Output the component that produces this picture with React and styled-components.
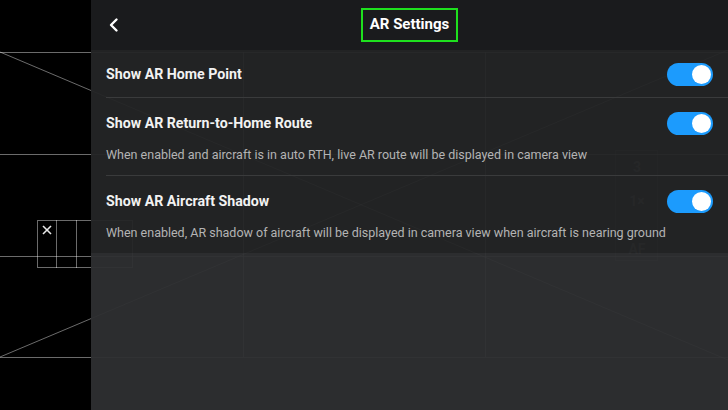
import React, { useState } from 'react';
import styled, { createGlobalStyle } from 'styled-components';

const GlobalStyle = createGlobalStyle`
  html, body {
    margin: 0;
    padding: 0;
    width: 728px;
    height: 410px;
    overflow: hidden;
    background: #000;
    font-family: Roboto, 'Liberation Sans', sans-serif;
  }
`;

const settings = [
  { id: 'home', title: 'Show AR Home Point' },
  {
    id: 'rth',
    title: 'Show AR Return-to-Home Route',
    desc: 'When enabled and aircraft is in auto RTH, live AR route will be displayed in camera view',
  },
  {
    id: 'shadow',
    title: 'Show AR Aircraft Shadow',
    desc: 'When enabled, AR shadow of aircraft will be displayed in camera view when aircraft is nearing ground',
  },
];

// camera feed grid, lies under the whole page
const CameraView = () => (
  <CameraSvg viewBox="0 0 728 410" width="728" height="410">
    <g stroke="rgba(255,255,255,0.42)" strokeWidth="1" fill="none">
      <line x1="0" y1="52.5" x2="728" y2="52.5" />
      <line x1="0" y1="154.5" x2="728" y2="154.5" />
      <line x1="0" y1="256.5" x2="728" y2="256.5" />
      <line x1="0" y1="357.5" x2="728" y2="357.5" />
      <line x1="243.5" y1="52" x2="243.5" y2="357" />
      <line x1="485.5" y1="52" x2="485.5" y2="357" />
      <line x1="0" y1="52" x2="728" y2="360" />
      <line x1="0" y1="357" x2="728" y2="50" />
      <rect x="37.5" y="220.5" width="95" height="47" />
      <line x1="56.5" y1="220" x2="56.5" y2="268" />
      <line x1="76.5" y1="220" x2="76.5" y2="268" />
    </g>
    <g stroke="rgba(255,255,255,0.2)" strokeWidth="1" fill="none">
      <rect x="615.5" y="150.5" width="42" height="110" />
    </g>
    <g stroke="#e8e8e8" strokeWidth="1.6">
      <line x1="43" y1="226" x2="51" y2="234" />
      <line x1="51" y1="226" x2="43" y2="234" />
    </g>
    <g fill="rgba(255,255,255,0.4)" fontFamily="Roboto, sans-serif" fontWeight="700" fontSize="14" textAnchor="middle">
      <text x="637" y="172">3</text>
      <text x="637" y="206">1×</text>
      <text x="637" y="254">AF</text>
    </g>
  </CameraSvg>
);

const Switch = ({ on, onToggle }) => (
  <Track $on={on} onClick={onToggle}>
    <Knob $on={on} />
  </Track>
);

const SettingRow = ({ item, on, onToggle }) => (
  <Row>
    <RowHead>
      <RowTitle>{item.title}</RowTitle>
      <Switch on={on} onToggle={onToggle} />
    </RowHead>
    {item.desc && <RowDesc>{item.desc}</RowDesc>}
  </Row>
);

const App = () => {
  const [values, setValues] = useState({ home: true, rth: true, shadow: true });
  const toggle = id => setValues(v => ({ ...v, [id]: !v[id] }));

  return (
    <>
      <GlobalStyle />
      <CameraView />
      <Screen>
        <Spacer />
        <Panel>
          <Header>
            <BackButton aria-label="Back">
              <svg width="12" height="16" viewBox="0 0 12 16">
                <polyline points="8.5,2.5 3,8 8.5,13.5" fill="none" stroke="#fff" strokeWidth="2.4" strokeLinecap="round" strokeLinejoin="round" />
              </svg>
            </BackButton>
            <Title>AR Settings</Title>
          </Header>
          <List>
            {settings.map(item => (
              <SettingRow key={item.id} item={item} on={values[item.id]} onToggle={() => toggle(item.id)} />
            ))}
          </List>
          <Rest />
        </Panel>
      </Screen>
    </>
  );
};

export default App;

const CameraSvg = styled.svg`
  position: absolute;
  left: 0;
  top: 0;
  z-index: 0;
`;

const Screen = styled.div`
  position: relative;
  z-index: 1;
  display: grid;
  grid-template-columns: 91px 1fr;
  width: 728px;
  height: 410px;
`;

const Spacer = styled.div``;

const Panel = styled.div`
  display: flex;
  flex-direction: column;
  height: 410px;
  color: #fff;
`;

const Header = styled.header`
  position: relative;
  display: flex;
  align-items: center;
  justify-content: center;
  height: 50px;
  flex: none;
  background: rgba(27, 28, 30, 0.98);
`;

const BackButton = styled.button`
  position: absolute;
  left: 16px;
  top: 16px;
  width: 14px;
  height: 18px;
  padding: 0;
  border: 0;
  background: none;
  display: flex;
  align-items: center;
  justify-content: center;
`;

const Title = styled.h1`
  margin: 0 0 1px;
  padding: 5px 7px 6px;
  border: 2px solid #1ee01e;
  font-size: 15px;
  font-weight: 700;
  line-height: 19px;
  color: #fff;
`;

const List = styled.div`
  display: flex;
  flex-direction: column;
  background: rgba(36, 37, 38, 0.955);
`;

const Row = styled.div`
  display: flex;
  flex-direction: column;
  padding: 12px 15px 11px 15px;
  position: relative;

  & + & {
    padding-top: 14px;
  }

  & + &::before {
    content: '';
    position: absolute;
    left: 15px;
    right: 0;
    top: 0;
    height: 1px;
    background: #3a3b3c;
  }
`;

const RowHead = styled.div`
  display: flex;
  align-items: center;
  justify-content: space-between;
  height: 24px;
`;

const RowTitle = styled.span`
  font-size: 14.2px;
  font-weight: 700;
  color: #f2f2f2;
`;

const RowDesc = styled.p`
  margin: 11px 0 0;
  font-size: 12.5px;
  line-height: 18px;
  color: #b4b4b4;
`;

const Track = styled.div`
  width: 46px;
  height: 23px;
  border-radius: 12px;
  background: ${p => (p.$on ? '#1c9bfd' : '#555')};
  display: flex;
  align-items: center;
  justify-content: ${p => (p.$on ? 'flex-end' : 'flex-start')};
  padding: 0 2px;
  box-sizing: border-box;
  cursor: pointer;
`;

const Knob = styled.div`
  width: 19px;
  height: 19px;
  border-radius: 50%;
  background: #fff;
`;

const Rest = styled.div`
  flex: 1;
  background: rgba(46, 47, 49, 0.955);
`;
